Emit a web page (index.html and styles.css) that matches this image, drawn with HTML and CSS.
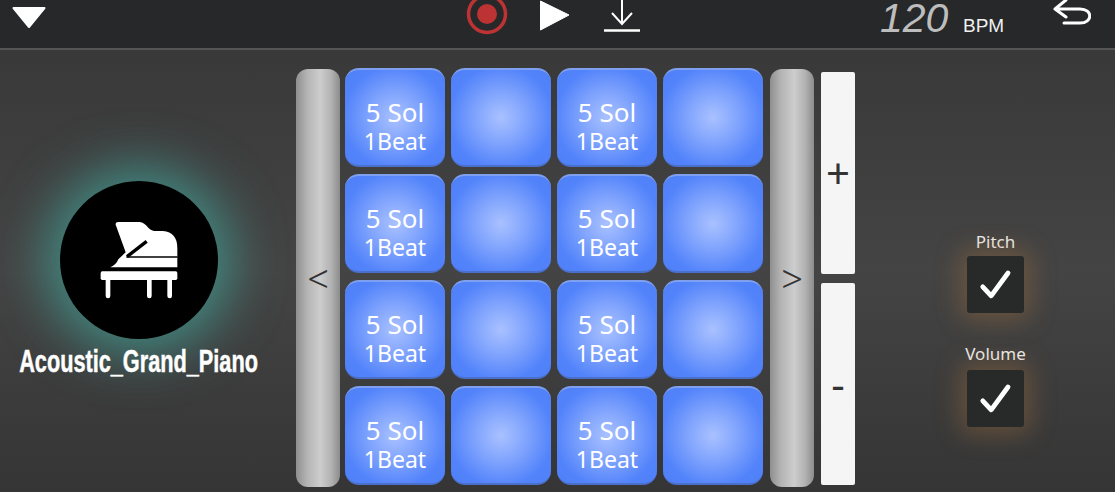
FILE: index.html
```html
<!DOCTYPE html>
<html lang="en">
<head>
<meta charset="utf-8">
<title>Pad</title>
<link rel="stylesheet" href="styles.css">
</head>
<body>
<div class="app">
  <header class="topbar">
    <svg class="icon tri" viewBox="0 0 34 48"><path d="M1.500 8H32.500L17 27Z" fill="#fff" stroke="#fff" stroke-width="2" stroke-linejoin="round"/></svg>
    <svg class="icon rec" viewBox="0 0 42 48"><circle cx="21" cy="14" r="18.500" fill="none" stroke="#bd3333" stroke-width="3.500"/><circle cx="21" cy="14" r="10" fill="#bd3333"/></svg>
    <svg class="icon play" viewBox="0 0 32 48"><path d="M1.500 1V30L30 15Z" fill="#fff" stroke="#fff" stroke-linejoin="round"/></svg>
    <svg class="icon dl" viewBox="0 0 36 48"><path d="M18 0V23M8 13L18 24L28 13" fill="none" stroke="#fff" stroke-width="2"/><path d="M0 30.500H36" stroke="#fff" stroke-width="2.500"/></svg>
    <div class="tempo"><span class="bpm-value">120</span><span class="bpm-unit">BPM</span></div>
    <svg class="icon back" viewBox="0 0 38 48"><path d="M13 0L2 9L13 17M2 9H27C40 9 40 23 27 23H11" fill="none" stroke="#fff" stroke-width="3" stroke-linecap="round" stroke-linejoin="round"/></svg>
  </header>
  <main class="stage">
    <section class="instrument">
      <div class="disc">
        <svg class="piano" viewBox="298 208 240 240">
          <path d="M348 222Q347 214 356 214H420Q434 216 446 231Q455 241 470 241H490Q533 245 533 292V350H332Q350 342 356 326L378 305Z" fill="#fff"/>
          <path d="M382 318L441 272" fill="none" stroke="#000" stroke-width="10"/>
          <path d="M380 319H534" fill="none" stroke="#000" stroke-width="5"/>
          <rect x="303" y="362" width="230" height="26" rx="5" fill="#fff"/>
          <path d="M325 385V436M449 385V436M510 385V436" stroke="#fff" stroke-width="14" stroke-linecap="round"/>
        </svg>
      </div>
      <div class="inst-name">Acoustic_Grand_Piano</div>
    </section>
    <button class="nav nav-left">&lt;</button>
    <div class="pads">
      <div class="pad"><span class="note">5 Sol</span><span class="beat">1Beat</span></div><div class="pad"></div>
      <div class="pad"><span class="note">5 Sol</span><span class="beat">1Beat</span></div><div class="pad"></div>
      <div class="pad"><span class="note">5 Sol</span><span class="beat">1Beat</span></div><div class="pad"></div>
      <div class="pad"><span class="note">5 Sol</span><span class="beat">1Beat</span></div><div class="pad"></div>
      <div class="pad"><span class="note">5 Sol</span><span class="beat">1Beat</span></div><div class="pad"></div>
      <div class="pad"><span class="note">5 Sol</span><span class="beat">1Beat</span></div><div class="pad"></div>
      <div class="pad"><span class="note">5 Sol</span><span class="beat">1Beat</span></div><div class="pad"></div>
      <div class="pad"><span class="note">5 Sol</span><span class="beat">1Beat</span></div><div class="pad"></div>
    </div>
    <button class="nav nav-right">&gt;</button>
    <div class="steppers">
      <button class="step">+</button>
      <button class="step">-</button>
    </div>
    <aside class="toggles">
      <div class="toggle"><span class="toggle-label">Pitch</span><span class="check"><svg viewBox="0 0 30 30"><path d="M4 16.500L11 24L25 5" fill="none" stroke="#fff" stroke-width="4" stroke-linecap="round" stroke-linejoin="round"/></svg></span></div>
      <div class="toggle"><span class="toggle-label">Volume</span><span class="check"><svg viewBox="0 0 30 30"><path d="M4 16.500L11 24L25 5" fill="none" stroke="#fff" stroke-width="4" stroke-linecap="round" stroke-linejoin="round"/></svg></span></div>
    </aside>
  </main>
</div>
</body>
</html>
```
FILE: styles.css
```css
* { box-sizing: border-box; }
html, body { margin: 0; height: 100%; overflow: hidden; }
body { background: #3d3d3d; font-family: "Noto Sans", sans-serif; }
.app { width: 1115px; height: 492px; display: flex; flex-direction: column; }

.topbar {
  height: 50px;
  flex: none;
  display: flex;
  align-items: flex-start;
  background: #27282a;
  border-bottom: 2px solid #555;
}
.icon { display: block; height: 48px; flex: none; }
.tri { width: 34px; margin-left: 12px; }
.rec { width: 42px; margin-left: 420px; }
.play { width: 32px; margin-left: 31px; }
.dl { width: 36px; margin-left: 33px; }
.tempo {
  margin-left: 240px;
  width: 173px;
  display: flex;
  align-items: baseline;
  height: 48px;
  font-family: "Liberation Sans", sans-serif;
}
.bpm-value { font-size: 41px; font-style: italic; color: #bdbdbd; line-height: 36px; width: 83px; font-weight: 400; }
.bpm-unit { font-size: 19px; color: #f0f0f0; line-height: 36px; }
.back { width: 38px; }

.stage {
  flex: 1;
  display: flex;
  align-items: flex-start;
  background: linear-gradient(180deg, #393939 0%, #444 50%, #353535 100%);
}
.instrument {
  width: 278px;
  margin-top: 131px;
  margin-right: 18px;
  display: flex;
  flex-direction: column;
  align-items: center;
  flex: none;
}
.disc {
  width: 158px;
  height: 158px;
  border-radius: 50%;
  background: #000;
  box-shadow: 0 0 50px 16px rgba(66, 178, 166, .62);
  display: flex;
  align-items: center;
  justify-content: center;
}
.piano { width: 80px; height: 80px; display: block; }
.inst-name {
  margin-top: 5px;
  font-family: "Liberation Sans", sans-serif;
  font-weight: 700;
  font-size: 31px;
  line-height: 36px;
  color: #fff;
  white-space: nowrap;
  -webkit-text-stroke: .5px #fff;
  transform: scaleX(.7);
}
.nav {
  width: 44px;
  height: 418px;
  margin-top: 19px;
  flex: none;
  padding: 0;
  border: 0;
  border-radius: 12px;
  background: linear-gradient(90deg, #8f8f8f 0%, #b4b4b4 25%, #cdcdcd 55%, #b2b2b2 80%, #8c8c8c 100%);
  color: #333;
  font-family: "Noto Sans", sans-serif;
  font-size: 38px;
  font-weight: 300;
}
.pads {
  display: grid;
  grid-template-columns: repeat(4, 100px);
  grid-template-rows: repeat(4, 99px);
  gap: 7px 6px;
  margin: 18px 7px 0 5px;
  flex: none;
}
.pad {
  border-radius: 14px;
  border-top: 2px solid #7fa0ee;
  border-bottom: 2px solid #4a70cc;
  background: radial-gradient(circle at 50% 50%, #a9c1ff 0%, #7fa3fd 38%, #5283fb 75%, #4f80f8 100%);
  display: flex;
  flex-direction: column;
  align-items: center;
  justify-content: center;
  padding-top: 17px;
  color: #fff;
}
.note { font-size: 26px; line-height: 30px; }
.beat { font-size: 23px; line-height: 28px; }
.steppers {
  width: 34px;
  margin: 22px 0 0 7px;
  display: flex;
  flex-direction: column;
  gap: 9px;
  flex: none;
}
.step {
  height: 202px;
  padding: 0 0 2px;
  border: 0;
  border-radius: 2px;
  background: #f5f5f5;
  color: #333;
  font-family: "Noto Sans", sans-serif;
  font-size: 42px;
}
.toggles {
  margin: 181px 0 0 112px;
  width: 57px;
  display: flex;
  flex-direction: column;
  gap: 30px;
  flex: none;
}
.toggle { display: flex; flex-direction: column; align-items: center; width: 57px; }
.toggle-label { font-size: 17px; line-height: 22px; color: #eee; white-space: nowrap; height: 25px; }
.toggle + .toggle .toggle-label { height: 27px; }
.check {
  width: 57px;
  height: 57px;
  border-radius: 3px;
  background: #272a29;
  box-shadow: 0 0 24px 7px rgba(170, 115, 60, .38);
  display: flex;
  align-items: center;
  justify-content: center;
}
.check svg { width: 36px; height: 36px; display: block; }
```
